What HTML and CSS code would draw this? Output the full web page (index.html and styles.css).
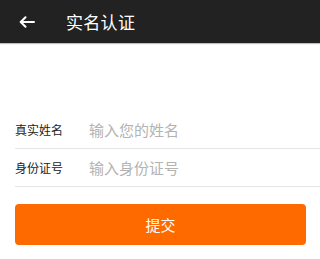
FILE: index.html
```html
<!DOCTYPE html>
<html lang="zh-CN">
<head>
<meta charset="utf-8">
<link rel="stylesheet" href="styles.css">
</head>
<body>
<header class="bar">
  <span class="back">
    <svg width="16" height="12" viewBox="0 0 16 12"><path d="M15 6H2M6.5 1.2L1.7 6l4.8 4.8" fill="none" stroke="#fff" stroke-width="2" stroke-linecap="round" stroke-linejoin="round"/></svg>
  </span>
  <h1 class="title">实名认证</h1>
</header>
<main class="form">
  <div class="row"><span class="label">真实姓名</span><span class="ph">输入您的姓名</span></div>
  <div class="row"><span class="label">身份证号</span><span class="ph">输入身份证号</span></div>
  <button class="submit">提交</button>
</main>
</body>
</html>
```

FILE: styles.css
```css
html, body { margin: 0; padding: 0; background: #fff; }
body { font-family: "Noto Sans CJK SC", "Noto Sans", sans-serif; width: 320px; }
.bar {
  height: 43px;
  background: #222222;
  display: flex;
  align-items: center;
  box-shadow: 0 1px 1px rgba(0,0,0,0.25);
}
.back { display: flex; width: 16px; margin-left: 19px; }
.title { margin: 0 0 0 31px; font-size: 17px; font-weight: 400; color: #fff; letter-spacing: 0.3px; line-height: 1; }
.form { padding-top: 68px; }
.row {
  margin-left: 15px;
  height: 37px;
  display: flex;
  align-items: center;
  border-bottom: 1px solid #e6e6e6;
}
.label { width: 74px; font-size: 12px; color: #222; }
.ph { font-size: 15px; color: #b3b3b3; }
.submit {
  display: block;
  margin: 17px 0 0 15px;
  width: 291px;
  height: 41px;
  border: none;
  border-radius: 4px;
  background: #ff6a00;
  color: #fff;
  font-family: inherit;
  font-size: 15px;
}
```
